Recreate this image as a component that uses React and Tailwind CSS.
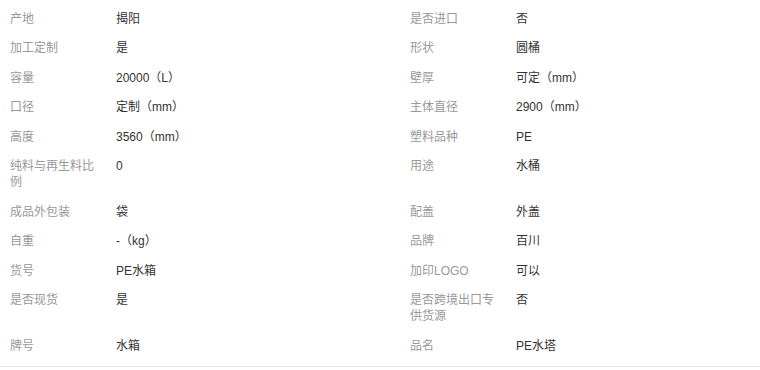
import React from 'react';

const rows = [
  [['产地', '揭阳'], ['是否进口', '否']],
  [['加工定制', '是'], ['形状', '圆桶']],
  [['容量', '20000（L）'], ['壁厚', '可定（mm）']],
  [['口径', '定制（mm）'], ['主体直径', '2900（mm）']],
  [['高度', '3560（mm）'], ['塑料品种', 'PE']],
  [['纯料与再生料比例', '0'], ['用途', '水桶']],
  [['成品外包装', '袋'], ['配盖', '外盖']],
  [['自重', '-（kg）'], ['品牌', '百川']],
  [['货号', 'PE水箱'], ['加印LOGO', '可以']],
  [['是否现货', '是'], ['是否跨境出口专供货源', '否']],
  [['牌号', '水箱'], ['品名', 'PE水塔']],
];

const Cell = ({ label, value }) => (
  <div className="flex items-start py-[6.75px] pl-[10px]">
    <div className="w-[90px] mr-[16px] shrink-0 text-[#999999] leading-[16px]">{label}</div>
    <div className="flex-1 text-[#333333] leading-[16px]">{value}</div>
  </div>
);

export default function App() {
  return (
    <div
      className="w-[760px] h-[370px] bg-white text-[12px]"
      style={{ fontFamily: '"Liberation Sans", "Noto Sans CJK SC", sans-serif' }}
    >
      <div className="pt-[4px] pb-[5.5px] border-b border-[#e6e6e6]">
        {rows.map((r, i) => (
          <div key={i} className="grid grid-cols-[400px_360px]">
            <Cell label={r[0][0]} value={r[0][1]} />
            <Cell label={r[1][0]} value={r[1][1]} />
          </div>
        ))}
      </div>
    </div>
  );
}
